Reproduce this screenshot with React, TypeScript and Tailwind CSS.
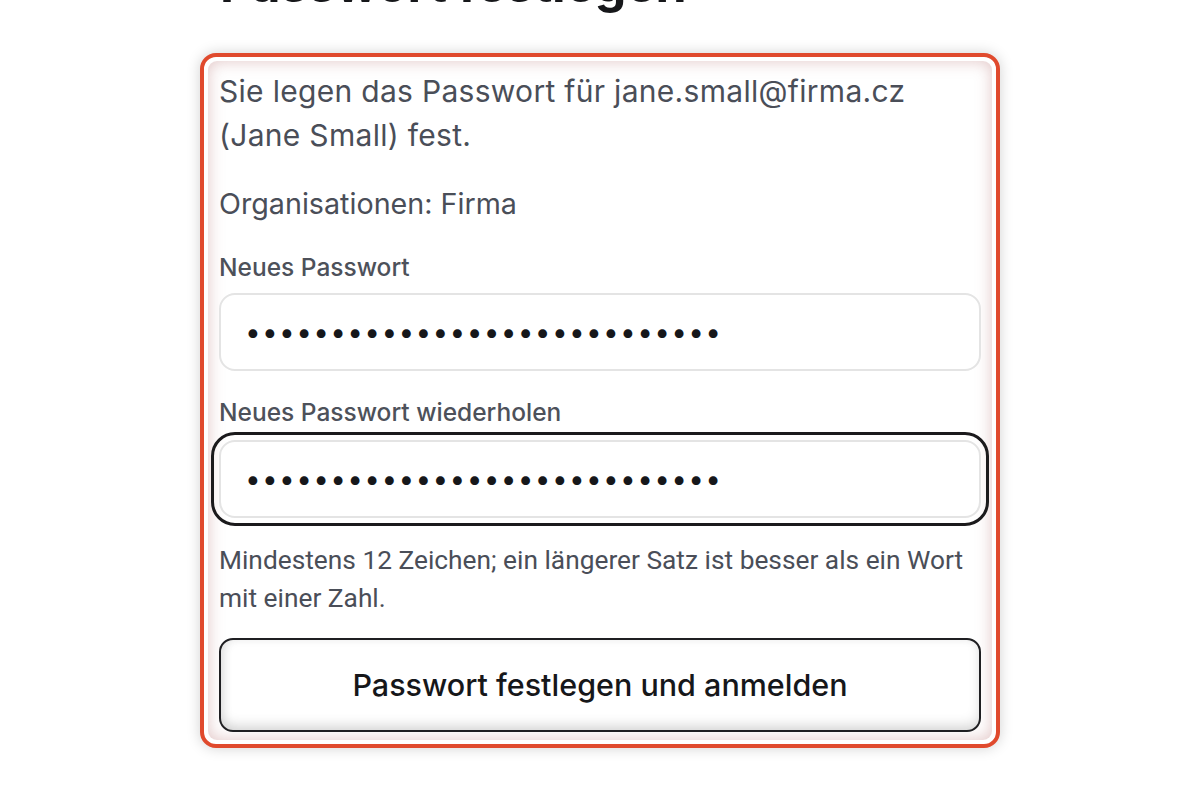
import React from 'react';

const dots = 'abcdefghijklmnopqrstuvwxyz12';

const App = () => {
  return (
    <main className="min-h-[800px] bg-white font-['Inter','Noto_Sans',sans-serif] overflow-hidden">
      <div className="w-[800px] mx-auto">
        <h1 className="ml-[20px] -mt-[46px] text-[50px] leading-[60px] font-bold text-[#16171a] tracking-[-0.3px]">
          Passwort festlegen
        </h1>

        <section className="mt-[39px] rounded-[16px] border-4 border-[#e04a2d] bg-white p-[4px] shadow-[0_0_14px_rgba(0,0,0,0.18)]">
          <div className="rounded-[9px] bg-white px-[11px] pt-[8px] pb-[8px] shadow-[inset_0_0_16px_rgba(170,90,90,0.35)]">
            <p className="text-[30px] leading-[44px] tracking-[0.3px] text-[#4a4e58]">
              Sie legen das Passwort für jane.small@firma.cz (Jane Small) fest.
            </p>
            <p className="mt-[25px] text-[28.7px] leading-[44px] text-[#4a4e58]">Organisationen: Firma</p>

            <label className="block mt-[24px] text-[24.5px] leading-[35px] font-medium text-[#4d515a]">
              Neues Passwort
            </label>
            <input
              type="password"
              readOnly
              value={dots}
              className="mt-[8px] block w-full h-[78px] rounded-[16px] border-2 border-[#e4e4e4] bg-white px-[24px] text-[28px] tracking-[1.3px] text-[#16171a] outline-none"
            />

            <label className="block mt-[24px] text-[24.5px] leading-[35px] font-medium text-[#4d515a]">
              Neues Passwort wiederholen
            </label>
            <input
              type="password"
              readOnly
              value={dots}
              className="mt-[10px] block w-full h-[78px] rounded-[16px] border-2 border-[#e4e4e4] bg-white px-[24px] text-[28px] tracking-[1.3px] text-[#16171a] outline-[3px] outline-solid outline-[#1b1a1c] outline-offset-[5px]"
            />

            <p className="mt-[23px] text-[26.3px] leading-[38px] text-[#4a4e58] font-['Roboto',sans-serif]">
              Mindestens 12 Zeichen; ein längerer Satz ist besser als ein Wort mit einer Zahl.
            </p>

            <button className="mt-[21px] w-full h-[94px] rounded-[14px] border-2 border-[#1f1f22] bg-white text-[30.5px] font-medium text-[#16171a] shadow-[inset_0_-6px_12px_rgba(0,0,0,0.12),inset_4px_0_10px_rgba(0,0,0,0.06)]">
              Passwort festlegen und anmelden
            </button>
          </div>
        </section>
      </div>
    </main>
  );
};

export default App;
